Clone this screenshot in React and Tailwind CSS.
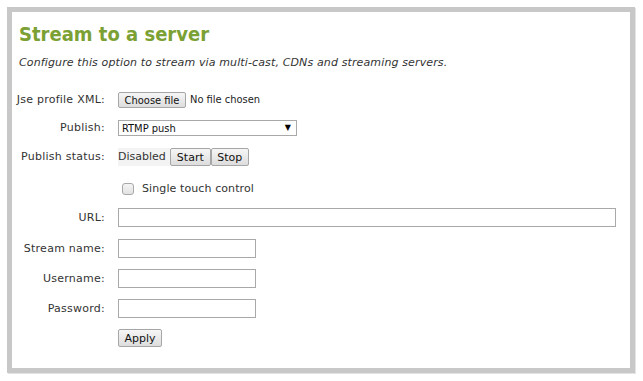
import React from "react";

const font = { fontFamily: '"DejaVu Sans", Verdana, sans-serif' };
const cond = { fontFamily: '"DejaVu Sans Condensed", "DejaVu Sans", sans-serif' };

function Label({ children }) {
  return (
    <div className="w-[93px] shrink-0 text-right text-[11px] leading-[14px] tracking-[0.25px] text-[#333]">
      {children}
    </div>
  );
}

function Btn({ children, className = "" }) {
  return (
    <button
      className={
        "flex items-center justify-center rounded-[2px] border border-[#a6a6a6] bg-gradient-to-b from-[#f6f6f6] to-[#dddddd] text-[11px] leading-none text-[#111] " +
        className
      }
    >
      {children}
    </button>
  );
}

function TextBox({ w }) {
  return <div className={"h-[19px] border border-[#a9a9a9] bg-white " + w} />;
}

export default function App() {
  return (
    <div className="min-h-[381px] w-[643px] bg-white p-[7px]" style={font}>
      <div className="h-[366px] w-[628px] border-[5px] border-[#c8c8c8] bg-white shadow-[1px_1px_0_#e4e4e4]">
        <div className="pl-[7px] pt-[10px]">
          <h1 className="text-[20px] font-bold leading-[24px] text-[#7ba033]" style={cond}>
            Stream to a server
          </h1>
          <p className="mt-[10px] text-[11px] italic leading-[14px] tracking-[0.13px] text-[#333]">
            Configure this option to stream via multi-cast, CDNs and streaming servers.
          </p>
        </div>

        <div className="mt-[22px] flex flex-col">
          <div className="flex h-[16px] items-center gap-[13px]">
            <Label>Jse profile XML:</Label>
            <div className="flex items-center gap-[4px]">
              <Btn className="h-[16px] w-[68px]">
                <span style={cond}>Choose file</span>
              </Btn>
              <span className="text-[11px] text-[#222]" style={cond}>
                No file chosen
              </span>
            </div>
          </div>

          <div className="mt-[12px] flex h-[16px] items-center gap-[13px]">
            <Label>Publish:</Label>
            <div className="flex h-[16px] w-[179px] items-center justify-between border border-[#a9a9a9] bg-white pl-[3px] pr-[5px]">
              <span className="text-[11px] leading-none text-[#111]" style={cond}>
                RTMP push
              </span>
              <span className="text-[8px] leading-none text-black">▼</span>
            </div>
          </div>

          <div className="mt-[12px] flex h-[18px] items-center gap-[13px]">
            <Label>Publish status:</Label>
            <div className="flex items-center">
              <span className="flex h-[18px] items-center bg-[#f3f3f3] pr-[4px] text-[11px] text-[#333]">
                Disabled
              </span>
              <Btn className="h-[18px] w-[41px]">Start</Btn>
              <Btn className="h-[18px] w-[38px]">Stop</Btn>
            </div>
          </div>

          <div className="mt-[16px] flex h-[14px] items-center gap-[13px]">
            <div className="w-[93px] shrink-0" />
            <div className="flex items-center">
              <span className="ml-[4px] h-[12px] w-[12px] rounded-[3px] border border-[#a8a8a8] bg-gradient-to-b from-[#f4f4f4] to-[#e2e2e2]" />
              <span className="ml-[8px] text-[11px] tracking-[0.1px] text-[#333]">Single touch control</span>
            </div>
          </div>

          <div className="mt-[12px] flex items-center gap-[13px]">
            <Label>URL:</Label>
            <TextBox w="w-[498px]" />
          </div>

          <div className="mt-[12px] flex items-center gap-[13px]">
            <Label>Stream name:</Label>
            <TextBox w="w-[138px]" />
          </div>

          <div className="mt-[11px] flex items-center gap-[13px]">
            <Label>Username:</Label>
            <TextBox w="w-[138px]" />
          </div>

          <div className="mt-[11px] flex items-center gap-[13px]">
            <Label>Password:</Label>
            <TextBox w="w-[138px]" />
          </div>

          <div className="mt-[11px] flex items-center gap-[13px]">
            <div className="w-[93px] shrink-0" />
            <Btn className="h-[18px] w-[44px]">Apply</Btn>
          </div>
        </div>
      </div>
    </div>
  );
}
